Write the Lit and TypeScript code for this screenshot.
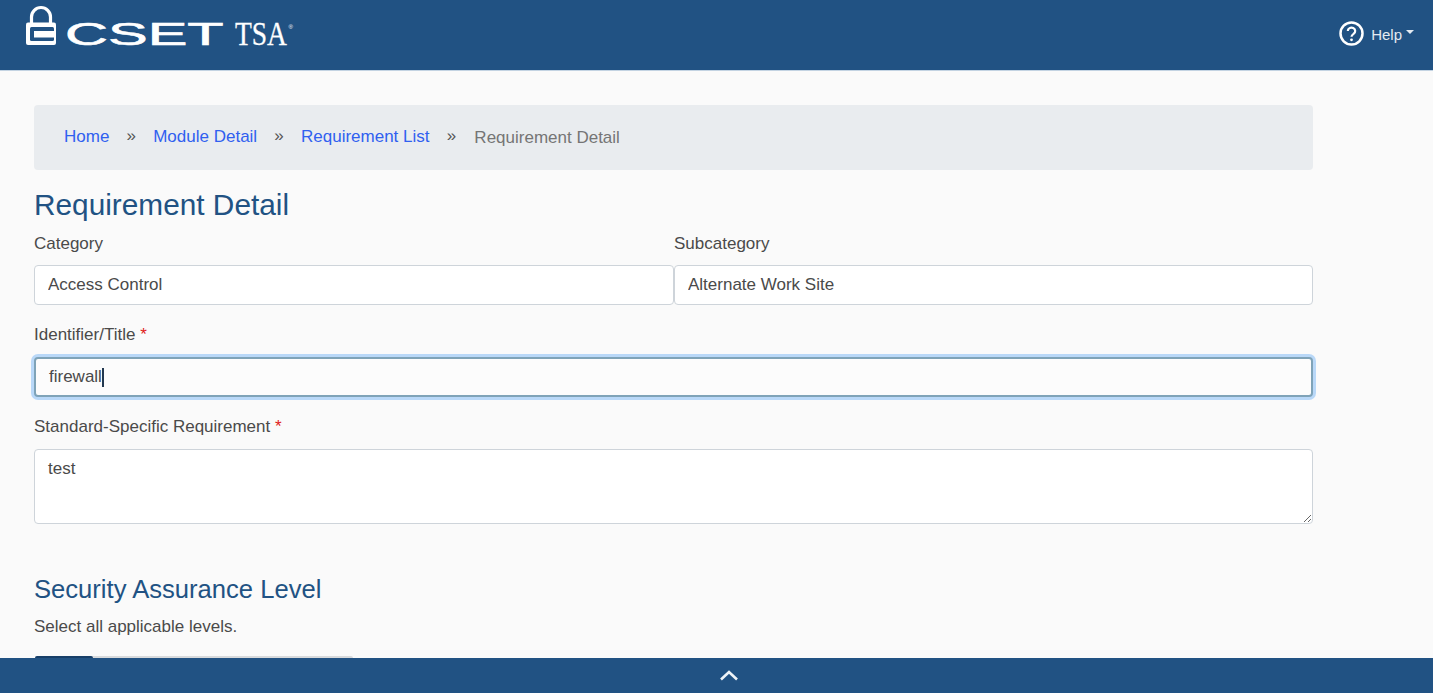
import { LitElement, html, css } from "lit";
import { customElement } from "lit/decorators.js";

@customElement("app-root")
export class AppRoot extends LitElement {
  static styles = css`
    :host {
      display: block;
      height: 693px;
      overflow: hidden;
      position: relative;
      background: #fafafa;
      color: #4a4a4a;
      font-family: "Liberation Sans", Arial, sans-serif;
      font-size: 17px;
    }
    header {
      height: 71px;
      background: #215283;
      border-bottom: 1px solid #c3d3e2;
      box-sizing: border-box;
      display: flex;
      justify-content: space-between;
      padding: 0 19px 0 25px;
    }
    .logo { display: block; }
    .help {
      display: flex;
      align-items: center;
      height: 66px;
      color: #e4eaf1;
      font-size: 15px;
    }
    .help svg { margin-right: 7px; }
    .help span { padding-top: 3px; }
    .help .caret {
      margin: 0 0 3px 4px;
      padding: 0;
      border-top: 4px solid #e4eaf1;
      border-left: 4px solid transparent;
      border-right: 4px solid transparent;
    }
    main {
      width: 1279px;
      margin-left: 34px;
      padding-top: 34px;
    }
    .crumbs {
      box-sizing: border-box;
      height: 65px;
      background: #e9ecef;
      border-radius: 4px;
      display: flex;
      align-items: center;
      padding: 0 30px 2px;
      color: #333;
    }
    .crumbs a { color: #3060f0; text-decoration: none; }
    .crumbs .sep { margin: 0 17.2px; position: relative; top: -1px; color: #555; }
    .crumbs .current { color: #757575; position: relative; top: 1px; margin-left: 1px; }
    h1, h2 { margin: 0; color: #215283; font-weight: 400; }
    h1 { font-size: 29.8px; line-height: 36px; margin-top: 17px; }
    h2 { font-size: 25.6px; line-height: 32px; margin-top: 49px; }
    .two { display: grid; grid-template-columns: 640px 639px; margin-top: 10px; }
    label { display: block; line-height: 22px; margin-bottom: 11px; }
    .two label { margin-bottom: 10px; }
    .req { color: #e02020; }
    input, textarea {
      display: block;
      box-sizing: border-box;
      width: 100%;
      margin: 0;
      background: #fff;
      border: 1px solid #ced4da;
      border-radius: 4px;
      color: #4a4a4a;
      font: inherit;
      outline: none;
    }
    input { height: 40px; padding: 0 13px; }
    .field { margin-top: 19px; }
    .focus {
      height: 40px;
      box-sizing: border-box;
      background: #fcfcfc;
      border: 2px solid #7fa3b8;
      border-radius: 4px;
      box-shadow: 0 0 0 3px #b9d8f8;
      padding: 0 13px;
      display: flex;
      align-items: center;
    }
    .cursor { width: 2px; height: 19px; background: #22384f; }
    textarea { height: 75px; padding: 9px 13px; resize: vertical; }
    p { margin: 11px 0 0; line-height: 22px; }
    .tabs {
      position: absolute;
      left: 35px;
      top: 656px;
      width: 318px;
      height: 4px;
      background: #d8dadc;
      border-radius: 2px 2px 0 0;
    }
    .tabs div { width: 58px; height: 4px; background: #173f68; border-radius: 2px 2px 0 0; }
    footer {
      position: absolute;
      left: 0;
      right: 0;
      bottom: 0;
      height: 35px;
      background: #215283;
      display: flex;
      justify-content: center;
      align-items: center;
    }
    footer svg { margin: 0 0 2px 25px; }
  `;

  render() {
    return html`
      <header>
        <svg class="logo" width="280" height="70" viewBox="0 0 280 70">
          <path d="M6.500 23V17a9.500 9.500 0 0 1 19 0V23" fill="none" stroke="#fff" stroke-width="3.200"/>
          <rect x="1" y="22.500" width="30" height="22.500" rx="2" fill="#fff"/>
          <rect x="5" y="27" width="24" height="14" rx="1.500" fill="#215283"/>
          <rect x="9" y="31" width="22" height="6.500" fill="#fff"/>
          <text transform="translate(40 45) scale(1.92 1)" font-family="Liberation Sans" font-size="31" fill="#fff" stroke="#fff" stroke-width="0.6">CSET</text>
          <text transform="translate(210 45) scale(0.81 1)" font-family="Liberation Serif" font-size="34" fill="#fff" stroke="#fff" stroke-width="0.3">TSA</text>
          <text x="263.500" y="29" font-family="Liberation Sans" font-size="6" fill="#fff">®</text>
        </svg>
        <div class="help">
          <svg width="25" height="25" viewBox="0 0 25 25">
            <circle cx="12.500" cy="12.500" r="11" fill="none" stroke="#fff" stroke-width="2.500"/>
            <path d="M8.800 10a3.700 3.400 0 1 1 5.800 2.800c-1.400 1-2.100 1.500-2.100 3" fill="none" stroke="#fff" stroke-width="2.200"/>
            <circle cx="12.500" cy="18.800" r="1.400" fill="#fff"/>
          </svg>
          <span>Help</span><span class="caret"></span>
        </div>
      </header>
      <main>
        <nav class="crumbs">
          <a href="#">Home</a><span class="sep">»</span>
          <a href="#">Module Detail</a><span class="sep">»</span>
          <a href="#">Requirement List</a><span class="sep">»</span>
          <span class="current">Requirement Detail</span>
        </nav>
        <h1>Requirement Detail</h1>
        <div class="two">
          <div><label>Category</label><input .value=${"Access Control"} /></div>
          <div><label>Subcategory</label><input .value=${"Alternate Work Site"} /></div>
        </div>
        <div class="field">
          <label>Identifier/Title <span class="req">*</span></label>
          <div class="focus">firewall<span class="cursor"></span></div>
        </div>
        <div class="field">
          <label>Standard-Specific Requirement <span class="req">*</span></label>
          <textarea .value=${"test"}></textarea>
        </div>
        <h2>Security Assurance Level</h2>
        <p>Select all applicable levels.</p>
      </main>
      <div class="tabs"><div></div></div>
      <footer>
        <svg width="20" height="12" viewBox="0 0 20 12">
          <path d="M2 10.500L10 3l8 7.500" fill="none" stroke="#eef3f7" stroke-width="2.600"/>
        </svg>
      </footer>
    `;
  }
}
